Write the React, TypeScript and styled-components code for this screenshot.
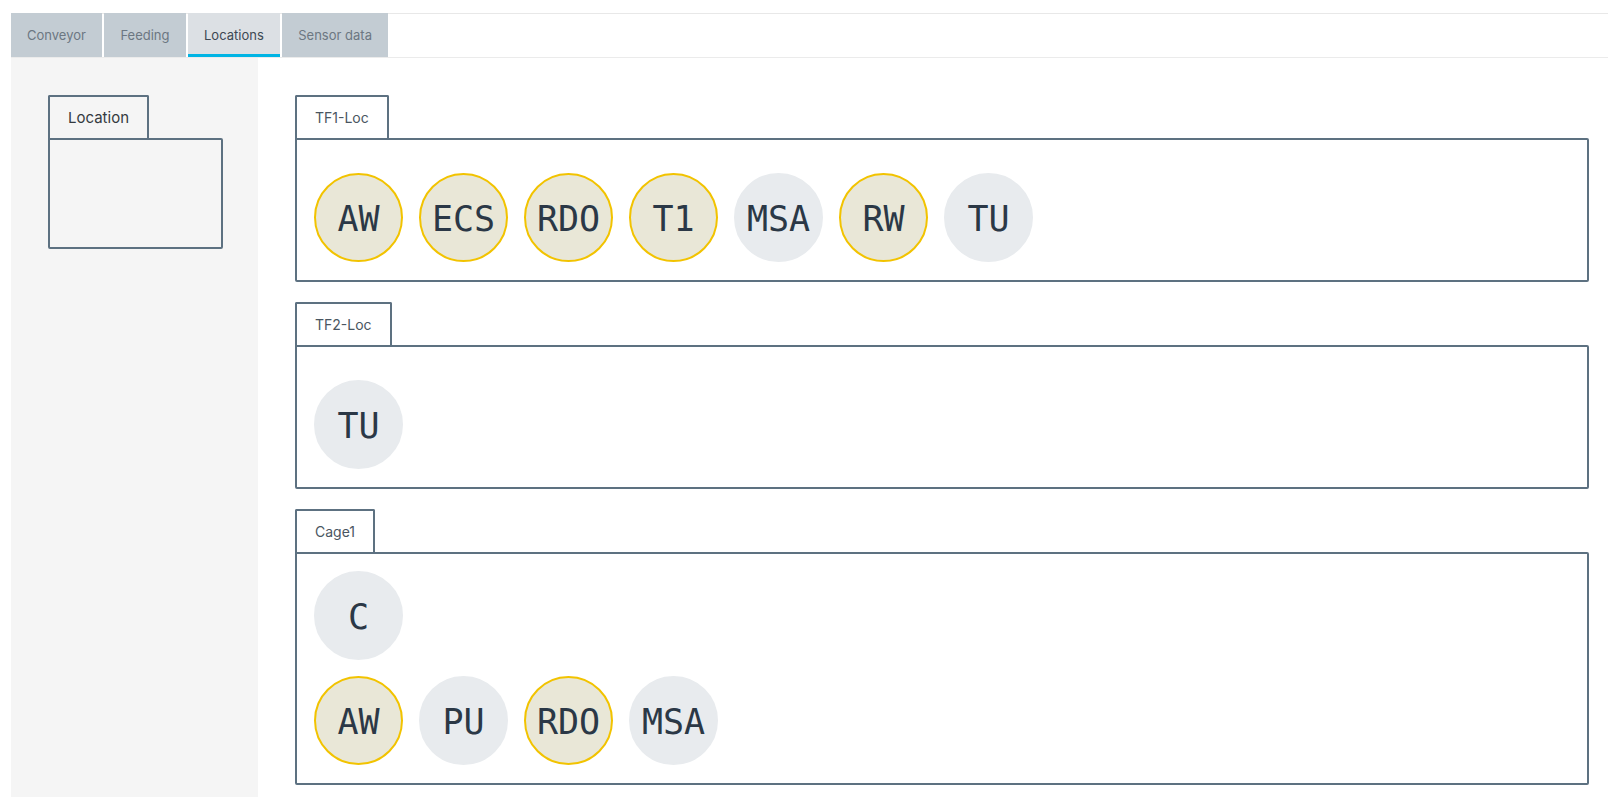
import React from "react";
import styled, { createGlobalStyle } from "styled-components";

const Global = createGlobalStyle`
  html, body {
    margin: 0;
    padding: 0;
    background: #ffffff;
    overflow: hidden;
  }
  * { box-sizing: border-box; }
`;

const Page = styled.div`
  height: 100vh;
  padding: 13px 0 0 11px;
  display: flex;
  flex-direction: column;
  font-family: Inter, "Noto Sans", sans-serif;
`;

const TabBar = styled.div`
  display: flex;
  gap: 2.5px;
  height: 45px;
  border-top: 1px solid #e8e8e8;
  border-bottom: 1px solid #ebebeb;
`;

const Tab = styled.div<{ $active?: boolean }>`
  display: flex;
  align-items: center;
  justify-content: center;
  padding: 0 16px;
  margin-top: -1px;
  height: 44px;
  font-size: 13px;
  color: ${(p) => (p.$active ? "#3d4853" : "#6c7782")};
  background: ${(p) => (p.$active ? "#dce0e4" : "#c3ccd3")};
  box-shadow: ${(p) => (p.$active ? "inset 0 -3px 0 #00b4e4" : "none")};
`;

const Content = styled.div`
  flex: 1;
  display: flex;
  min-height: 0;
`;

const Sidebar = styled.aside`
  width: 247px;
  background: #f5f5f5;
  padding: 37px 0 0 37px;
`;

const Main = styled.main`
  flex: 1;
  padding: 37px 19px 0 37px;
  display: flex;
  flex-direction: column;
  gap: 20px;
`;

const Section = styled.section`
  display: flex;
  flex-direction: column;
`;

const Label = styled.div<{ $side?: boolean }>`
  align-self: flex-start;
  height: 43px;
  padding: 0 ${(p) => (p.$side ? "18px" : "18px")};
  display: flex;
  align-items: center;
  border: 2px solid #5d7181;
  border-bottom: 0;
  border-radius: 2px 2px 0 0;
  font-size: ${(p) => (p.$side ? "15px" : "14px")};
  color: ${(p) => (p.$side ? "#343a40" : "#4a5661")};
`;

const SideBody = styled.div`
  width: 175px;
  height: 111px;
  border: 2px solid #5d7181;
  border-radius: 0 2px 2px 2px;
`;

const Body = styled.div`
  border: 2px solid #5d7181;
  border-radius: 0 2px 2px 2px;
  padding: 17px 17px 18px;
  display: flex;
  flex-direction: column;
  gap: 16px;
`;

const Row = styled.div`
  display: flex;
  gap: 16px;
`;

const Bubble = styled.div<{ $on?: boolean }>`
  width: 89px;
  height: 89px;
  border-radius: 50%;
  display: flex;
  align-items: center;
  justify-content: center;
  padding-top: 3px;
  background: ${(p) => (p.$on ? "#e9e7d7" : "#e8ebee")};
  border: 2px solid ${(p) => (p.$on ? "#f2c300" : "#e8ebee")};
  font-family: "DejaVu Sans Mono", "Liberation Mono", monospace;
  font-size: 35px;
  color: #2b3846;
`;

type Item = [string, boolean];

const locations: { name: string; rows: Item[][] }[] = [
  {
    name: "TF1-Loc",
    rows: [
      [],
      [
        ["AW", true],
        ["ECS", true],
        ["RDO", true],
        ["T1", true],
        ["MSA", false],
        ["RW", true],
        ["TU", false],
      ],
    ],
  },
  { name: "TF2-Loc", rows: [[], [["TU", false]]] },
  {
    name: "Cage1",
    rows: [
      [["C", false]],
      [
        ["AW", true],
        ["PU", false],
        ["RDO", true],
        ["MSA", false],
      ],
    ],
  },
];

const tabs = ["Conveyor", "Feeding", "Locations", "Sensor data"];

export default function App() {
  return (
    <>
      <Global />
      <Page>
        <TabBar>
          {tabs.map((t) => (
            <Tab key={t} $active={t === "Locations"}>
              {t}
            </Tab>
          ))}
        </TabBar>
        <Content>
          <Sidebar>
            <Section>
              <Label $side>Location</Label>
              <SideBody />
            </Section>
          </Sidebar>
          <Main>
            {locations.map((loc) => (
              <Section key={loc.name}>
                <Label>{loc.name}</Label>
                <Body>
                  {loc.rows.map((row, i) => (
                    <Row key={i}>
                      {row.map(([code, on], j) => (
                        <Bubble key={j} $on={on}>
                          {code}
                        </Bubble>
                      ))}
                    </Row>
                  ))}
                </Body>
              </Section>
            ))}
          </Main>
        </Content>
      </Page>
    </>
  );
}
